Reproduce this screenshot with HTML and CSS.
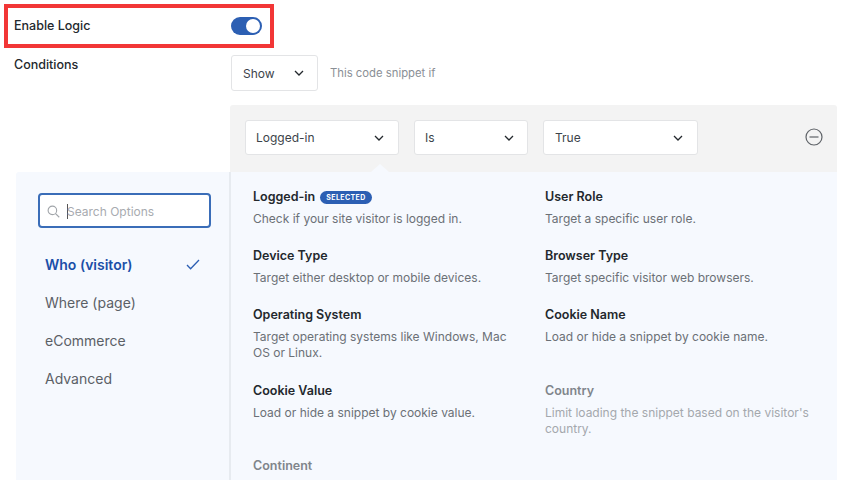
FILE: index.html
```html
<!DOCTYPE html>
<html lang="en">
<head>
<meta charset="utf-8">
<title>Enable Logic</title>
<link rel="stylesheet" href="styles.css">
</head>
<body>
<div class="page">
  <div class="enable">
    <span class="label">Enable Logic</span>
    <span class="toggle"><span class="knob"></span></span>
  </div>
  <div class="conditions">
    <span class="label cond-label">Conditions</span>
    <div class="cond-main">
      <div class="show-row">
        <div class="select sel-show"><span>Show</span><svg class="chev" viewBox="0 0 10 6"><path d="M1 1l4 4 4-4"/></svg></div>
        <span class="hint">This code snippet if</span>
      </div>
    </div>
  </div>
  <div class="rule-wrap">
    <div class="rule">
      <div class="select sel-a"><span>Logged-in</span><svg class="chev" viewBox="0 0 10 6"><path d="M1 1l4 4 4-4"/></svg></div>
      <div class="select sel-b"><span>Is</span><svg class="chev" viewBox="0 0 10 6"><path d="M1 1l4 4 4-4"/></svg></div>
      <div class="select sel-c"><span>True</span><svg class="chev" viewBox="0 0 10 6"><path d="M1 1l4 4 4-4"/></svg></div>
      <svg class="remove" viewBox="0 0 18 18"><circle cx="9" cy="9" r="8"/><path d="M4.5 9h9"/></svg>
    </div>
  </div>
  <div class="panel">
    <span class="caret"></span>
    <aside class="side">
      <div class="search">
        <svg class="mag" viewBox="0 0 14 14"><circle cx="5.8" cy="5.8" r="4.6"/><path d="M9.2 9.2l4 4"/></svg>
        <span class="cursor"></span>
        <span class="placeholder">Search Options</span>
      </div>
      <ul class="cats">
        <li class="cat active"><span>Who (visitor)</span><svg class="check" viewBox="0 0 14 11"><path d="M1 6l3.6 3.8L13 1"/></svg></li>
        <li class="cat">Where (page)</li>
        <li class="cat">eCommerce</li>
        <li class="cat">Advanced</li>
      </ul>
    </aside>
    <div class="options">
      <div class="opt h59"><h4>Logged-in <span class="badge">SELECTED</span></h4><p>Check if your site visitor is logged in.</p></div>
      <div class="opt h59"><h4>User Role</h4><p>Target a specific user role.</p></div>
      <div class="opt h59"><h4>Device Type</h4><p>Target either desktop or mobile devices.</p></div>
      <div class="opt h59"><h4>Browser Type</h4><p>Target specific visitor web browsers.</p></div>
      <div class="opt h76"><h4>Operating System</h4><p>Target operating systems like Windows, Mac OS or Linux.</p></div>
      <div class="opt h76"><h4>Cookie Name</h4><p>Load or hide a snippet by cookie name.</p></div>
      <div class="opt h75"><h4>Cookie Value</h4><p>Load or hide a snippet by cookie value.</p></div>
      <div class="opt h75 off"><h4>Country</h4><p>Limit loading the snippet based on the visitor's country.</p></div>
      <div class="opt off cont"><h4>Continent</h4></div>
    </div>
  </div>
</div>
</body>
</html>
```
FILE: styles.css
```css
* { box-sizing: border-box; }
html, body { margin: 0; padding: 0; height: 100%; background: #fff; overflow: hidden; }
body { font-family: Inter, "Liberation Sans", sans-serif; font-size: 12px; color: #1f2328; -webkit-font-smoothing: antialiased; }
.page { height: 480px; overflow: hidden; }
.label { font-weight: 500; font-size: 12.5px; color: #23282d; }
.enable { margin: 4px 0 0 4px; width: 270px; height: 44px; border: 4px solid #f23636; display: flex; align-items: center; justify-content: space-between; padding: 0 8px 2px 6px; }
.toggle { width: 31px; height: 18px; margin-top: 2px; border-radius: 9px; background: #2c5fb3; display: flex; align-items: center; justify-content: flex-end; padding-right: 2px; }
.knob { width: 14px; height: 14px; border-radius: 50%; background: #fff; }
.conditions { display: flex; margin-top: 7px; padding-left: 14px; }
.cond-label { width: 217px; margin-top: 2px; line-height: 16px; }
.show-row { display: flex; align-items: center; gap: 12px; }
.select { height: 35px; background: #fff; border: 1px solid #e3e4e6; border-radius: 3px; display: flex; align-items: center; justify-content: space-between; font-size: 12px; color: #3c434a; }
.chev { width: 10px; height: 6px; fill: none; stroke: #23282d; stroke-width: 1.3; }
.sel-show { width: 87px; height: 36px; padding: 0 13px 0 11px; }
.hint { font-size: 11.3px; color: #8a8f96; }
.rule-wrap { margin: 14px 8px 0 230px; }
.rule { height: 67px; background: #f3f3f3; border-radius: 3px 3px 0 0; display: flex; align-items: flex-start; padding: 15px 14px 0 15px; }
.sel-a { width: 154px; padding: 0 14px 0 10px; }
.sel-b { width: 114px; margin-left: 15px; padding: 0 13px 0 10px; }
.sel-c { width: 155px; margin-left: 15px; padding: 0 14px 0 11px; }
.remove { width: 18px; height: 18px; margin-left: auto; margin-top: 8px; fill: none; stroke: #5f6368; stroke-width: 1.2; }
.panel { position: relative; margin: 0 8px 0 16px; height: 320px; background: #f6f9fe; border-radius: 3px 0 0 0; display: flex; }
.caret { position: absolute; left: 355px; top: -8px; width: 0; height: 0; border-left: 9px solid transparent; border-right: 9px solid transparent; border-bottom: 8px solid #f6f9fe; }
.side { width: 215px; height: 100%; border-right: 2px solid #e7ebf0; padding: 21px 20px 0 22px; }
.search { width: 173px; height: 35px; background: #fff; border: 2px solid #3a6db8; border-radius: 4px; display: flex; align-items: center; padding: 1px 0 0 7px; }
.mag { width: 13px; height: 13px; fill: none; stroke: #a0a4a9; stroke-width: 1.2; flex: none; }
.cursor { width: 1px; height: 15px; background: #555; margin-left: 7px; flex: none; }
.placeholder { font-size: 12px; color: #a8abb0; margin-left: -1px; }
.cats { list-style: none; margin: 17px 0 0; padding: 0 0 0 7px; }
.cat { height: 38px; display: flex; align-items: center; justify-content: space-between; font-size: 14px; color: #5b6066; padding-right: 9px; }
.cat.active { color: #1b4fa8; font-weight: 600; }
.check { width: 14px; height: 11px; fill: none; stroke: #2c5fb3; stroke-width: 1.3; }
.options { flex: 1; display: grid; grid-template-columns: 292px 1fr; grid-auto-rows: min-content; padding: 16px 20px 0 22px; align-content: start; }
.opt h4 { margin: 0; font-size: 12.5px; font-weight: 600; line-height: 18px; color: #23282d; display: flex; align-items: center; gap: 5px; }
.opt p { margin: 5px 0 0; font-size: 12px; line-height: 16px; color: #6b7076; max-width: 268px; }
.h59 { height: 59px; }
.h76 { height: 76px; }
.h75 { height: 75px; }
.off h4 { color: #80858b; }
.off p { color: #a4a8ad; }
.badge { display: inline-block; background: #2c5fb3; color: #fff; font-size: 7px; font-weight: 700; letter-spacing: .4px; line-height: 13px; height: 13px; padding: 0 6px; border-radius: 7px; }
```
